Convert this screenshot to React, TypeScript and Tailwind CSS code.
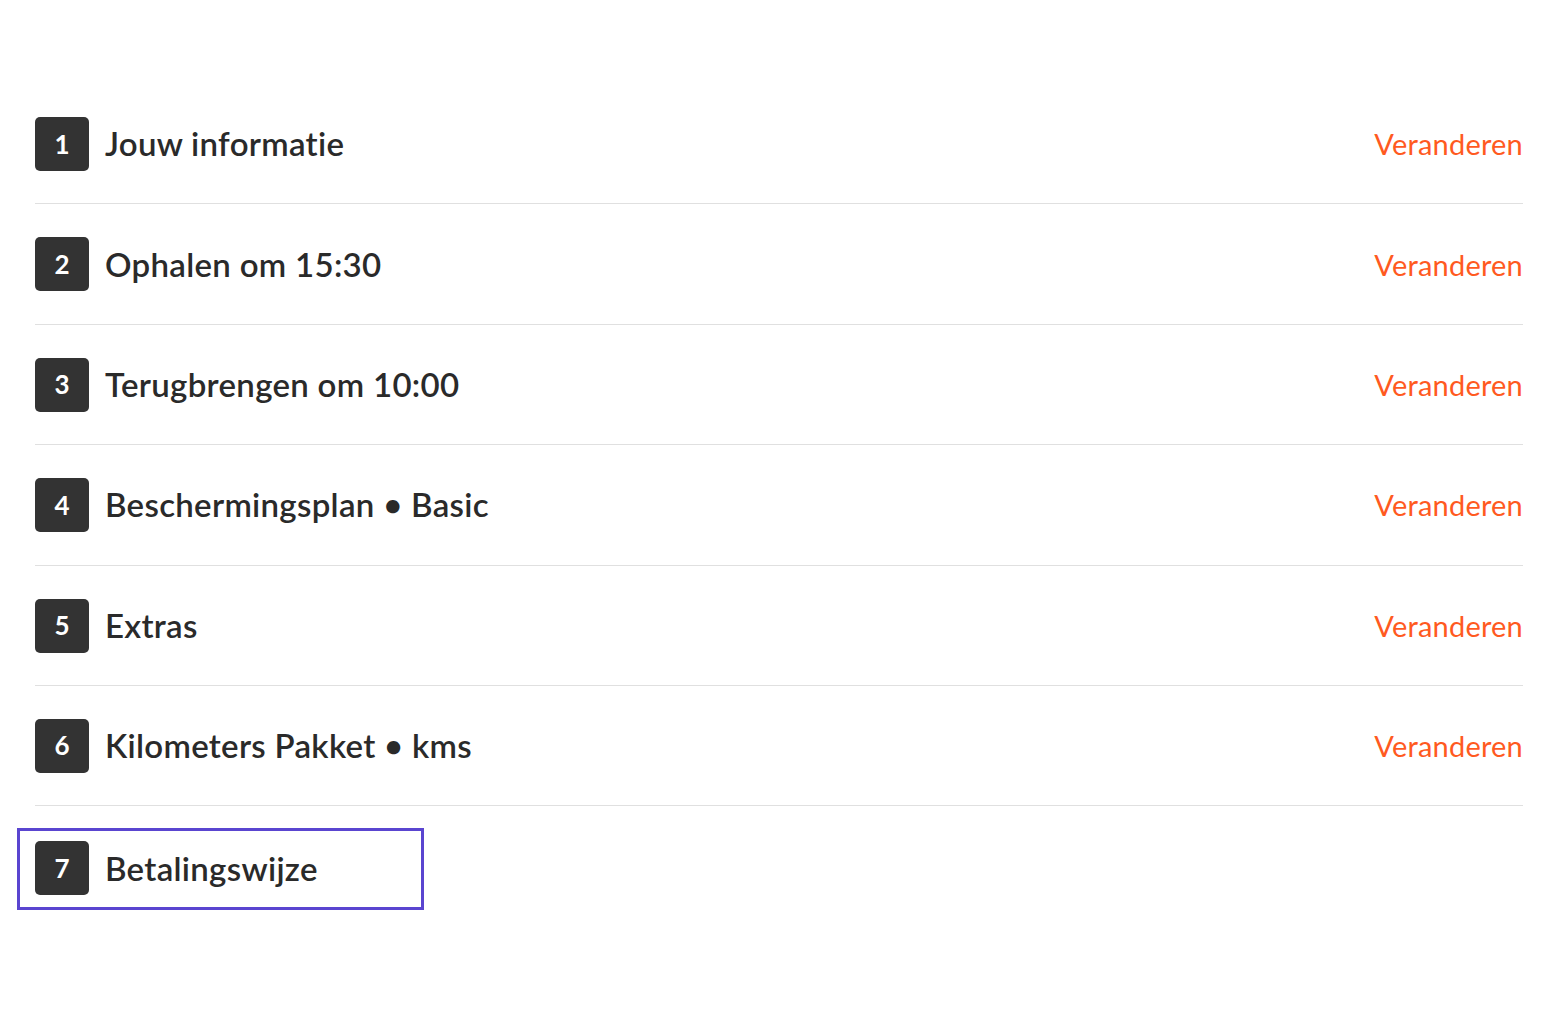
const steps = [
  { n: 1, label: "Jouw informatie" },
  { n: 2, label: "Ophalen om 15:30" },
  { n: 3, label: "Terugbrengen om 10:00" },
  { n: 4, label: "Beschermingsplan • Basic" },
  { n: 5, label: "Extras" },
  { n: 6, label: "Kilometers Pakket • kms" },
]

function StepBadge({ n }: { n: number }) {
  return (
    <span className="flex items-center justify-center w-[54px] h-[54px] rounded-[5px] bg-[#333333] text-white text-[26px] font-bold shrink-0">
      {n}
    </span>
  )
}

export default function App() {
  return (
    <div className="bg-white min-h-screen pt-[84px] px-[35px] font-['Lato','Noto_Sans',sans-serif] text-[#2a2a2a]">
      <div className="w-[1488px]">
        {steps.map((s) => (
          <div
            key={s.n}
            className="flex items-center justify-between pt-[33px] pb-[32.4px] border-b border-[#e0e0e0]"
          >
            <div className="flex items-center gap-4">
              <StepBadge n={s.n} />
              <span className="text-[33px] font-semibold tracking-[0.3px]">{s.label}</span>
            </div>
            <button className="text-[29px] text-[#ff5a1f] tracking-[0.2px]">Veranderen</button>
          </div>
        ))}

        {/* Actieve stap */}
        <div className="mt-[22px] -ml-[18px] w-[407px] h-[82px] border-[3px] border-[#5a45d0] flex items-start pt-[10px] pl-[15px]">
          <div className="flex items-center gap-4">
            <StepBadge n={7} />
            <span className="text-[33px] font-semibold tracking-[0.3px]">Betalingswijze</span>
          </div>
        </div>
      </div>
    </div>
  )
}
